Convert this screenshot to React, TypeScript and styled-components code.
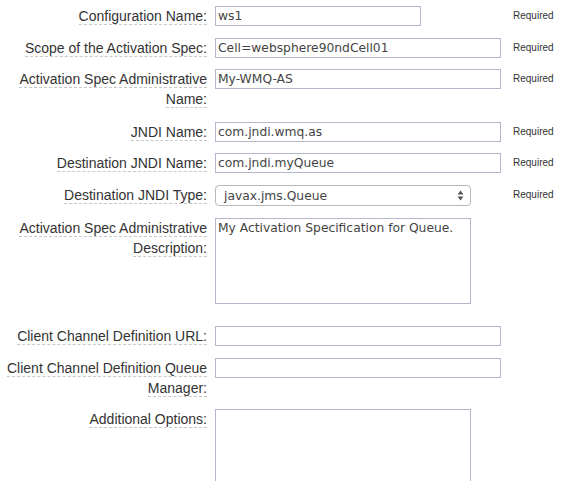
import React from "react";
import styled, { createGlobalStyle } from "styled-components";

const Global = createGlobalStyle`
  html, body { margin: 0; padding: 0; background: #fff; }
  body { font-family: "Liberation Sans", Arial, sans-serif; color: #333; }
`;

const Form = styled.form`
  display: flex;
  flex-direction: column;
  padding-top: 6px;
  width: 569px;
`;

const Row = styled.div<{ $after?: number }>`
  display: grid;
  grid-template-columns: 207px 286px auto;
  column-gap: 8px;
  align-items: start;
  padding-bottom: ${(p) => p.$after ?? 12}px;
`;

const LabelCell = styled.label`
  text-align: right;
  font-size: 14px;
  line-height: 20px;
  color: #333;
`;

const LabelText = styled.span`
  border-bottom: 1px dashed #c8c8c8;
`;

const FieldCell = styled.div<{ $width?: number }>`
  display: flex;
  width: ${(p) => p.$width ?? 286}px;
`;

const TextInput = styled.input`
  box-sizing: border-box;
  width: 100%;
  height: 20px;
  margin: 0;
  padding: 0 2px;
  border: 1px solid #b3b7c9;
  border-radius: 0;
  background: #fff;
  font-family: "DejaVu Sans", "Liberation Sans", sans-serif;
  font-size: 12.3px;
  color: #444;
  outline: none;
`;

const TextArea = styled.textarea`
  box-sizing: border-box;
  width: 100%;
  height: 86px;
  margin: 0;
  padding: 1px 2px;
  border: 1px solid #b3b7c9;
  border-radius: 0;
  resize: none;
  background: #fff;
  font-family: "DejaVu Sans", "Liberation Sans", sans-serif;
  font-size: 12.3px;
  line-height: 16px;
  color: #444;
  outline: none;
`;

const SelectBox = styled.div`
  box-sizing: border-box;
  width: 100%;
  height: 21px;
  display: flex;
  align-items: center;
  justify-content: space-between;
  padding: 0 6px 0 8px;
  border: 1px solid #b8b8b8;
  border-radius: 4px;
  background: #fff;
  font-family: "DejaVu Sans", "Liberation Sans", sans-serif;
  font-size: 12.3px;
  color: #444;
`;

const RequiredNote = styled.span`
  margin-left: 4px;
  font-size: 10px;
  line-height: 20px;
  color: #333;
`;

const Arrows = () => (
  <svg width="7" height="11" viewBox="0 0 7 11">
    <path d="M3.5 0.5 L6.5 4.5 L0.5 4.5 Z" fill="#555" />
    <path d="M3.5 10.5 L6.5 6.5 L0.5 6.5 Z" fill="#555" />
  </svg>
);

type Field = {
  label: string;
  kind: "input" | "select" | "textarea";
  value?: string;
  width?: number;
  required?: boolean;
  after?: number;
};

const fields: Field[] = [
  { label: "Configuration Name:", kind: "input", value: "ws1", width: 206, required: true },
  { label: "Scope of the Activation Spec:", kind: "input", value: "Cell=websphere90ndCell01", required: true, after: 11 },
  { label: "Activation Spec Administrative Name:", kind: "input", value: "My-WMQ-AS", required: true, after: 13 },
  { label: "JNDI Name:", kind: "input", value: "com.jndi.wmq.as", required: true, after: 11 },
  { label: "Destination JNDI Name:", kind: "input", value: "com.jndi.myQueue", required: true },
  { label: "Destination JNDI Type:", kind: "select", value: "javax.jms.Queue", width: 256, required: true },
  { label: "Activation Spec Administrative Description:", kind: "textarea", value: "My Activation Specification for Queue.", width: 256, after: 22 },
  { label: "Client Channel Definition URL:", kind: "input", value: "" },
  { label: "Client Channel Definition Queue Manager:", kind: "input", value: "", after: 11 },
  { label: "Additional Options:", kind: "textarea", value: "", width: 256 },
];

export default function App() {
  return (
    <>
      <Global />
      <Form onSubmit={(e) => e.preventDefault()}>
        {fields.map((f) => (
          <Row key={f.label} $after={f.after}>
            <LabelCell>
              <LabelText>{f.label}</LabelText>
            </LabelCell>
            <FieldCell $width={f.width}>
              {f.kind === "input" && <TextInput defaultValue={f.value} />}
              {f.kind === "textarea" && <TextArea defaultValue={f.value} />}
              {f.kind === "select" && (
                <SelectBox>
                  <span>{f.value}</span>
                  <Arrows />
                </SelectBox>
              )}
            </FieldCell>
            {f.required ? <RequiredNote>Required</RequiredNote> : <span />}
          </Row>
        ))}
      </Form>
    </>
  );
}
